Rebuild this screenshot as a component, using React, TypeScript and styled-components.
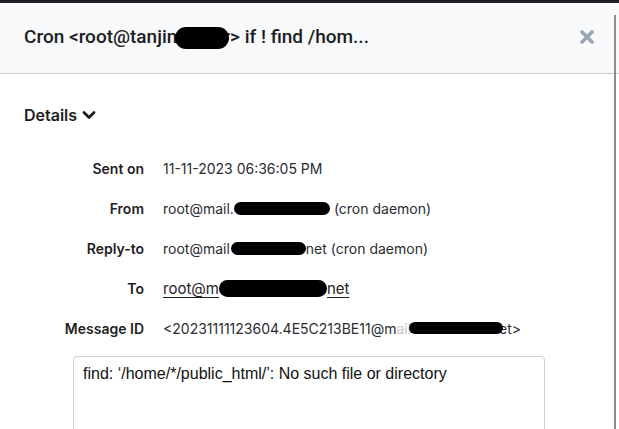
import React from "react";
import styled, { createGlobalStyle } from "styled-components";

const Global = createGlobalStyle`
  html, body { margin: 0; padding: 0; background: #ffffff; }
  body { font-family: Inter, "Noto Sans", Arial, sans-serif; color: #1d1f24; overflow: hidden; }
`;

const Page = styled.div`
  position: relative;
  width: 619px;
  height: 429px;
  overflow: hidden;
  background: #ffffff;
`;

const TopStrip = styled.div`
  height: 3px;
  background: #1e2025;
`;

const Header = styled.header`
  height: 71px;
  box-sizing: border-box;
  display: flex;
  align-items: center;
  justify-content: space-between;
  padding: 0 25px 2px 24px;
  background: #f7f9fb;
  border-bottom: 1px solid #c6cfda;
`;

const Title = styled.h1`
  margin: 0;
  font-family: Roboto, Inter, Arial, sans-serif;
  font-size: 19px;
  font-weight: 500;
  color: #1b1d22;
  white-space: nowrap;
`;

const Blob = styled.span<{ $w: number; $h: number; $ml?: number; $mr?: number }>`
  display: inline-block;
  width: ${(p) => p.$w}px;
  height: ${(p) => p.$h}px;
  margin-left: ${(p) => p.$ml ?? 0}px;
  margin-right: ${(p) => p.$mr ?? 0}px;
  background: #000;
  border-radius: 999px;
  vertical-align: middle;
  position: relative;
`;

const Faint = styled.span`
  color: #c4c6ca;
`;

const CloseButton = styled.button`
  border: 0;
  background: none;
  padding: 0;
  width: 14px;
  height: 14px;
  display: flex;
  cursor: pointer;
`;

const ScrollEdge = styled.div`
  position: absolute;
  left: 614px;
  top: 15px;
  bottom: 0;
  width: 2px;
  background: #8c8c8c;
`;

const Body = styled.section`
  padding: 32px 0 0 24px;
`;

const DetailsToggle = styled.div`
  display: flex;
  align-items: center;
  gap: 5px;
  font-size: 16px;
  font-weight: 600;
  color: #1b1d22;
  height: 18px;
`;

const Grid = styled.dl`
  display: grid;
  grid-template-columns: 120px 1fr;
  column-gap: 19px;
  grid-auto-rows: 40px;
  margin: 24px 0 0 0;
`;

const Label = styled.dt`
  display: flex;
  align-items: center;
  justify-content: flex-end;
  font-size: 14px;
  font-weight: 600;
  color: #1f2126;
`;

const Value = styled.dd`
  margin: 0;
  display: flex;
  align-items: center;
  font-size: 14px;
  color: #2a2c31;
  white-space: nowrap;
`;

const Link = styled.span`
  font-size: 15px;
  color: #1f2126;
  text-decoration: underline;
  text-underline-offset: 3px;
  display: inline-flex;
  align-items: center;
`;

const MessageBox = styled.div`
  margin: 8px 0 0 49px;
  width: 472px;
  height: 120px;
  box-sizing: border-box;
  border: 1px solid #c9d1dc;
  border-radius: 4px;
  padding: 8px 9px;
  font-family: "Liberation Sans", Arial, sans-serif;
  font-size: 16px;
  color: #111;
`;

export default function App() {
  return (
    <Page>
      <Global />
      <TopStrip />
      <Header>
        <Title>
          Cron &lt;root@tanjim
          <Blob $w={54} $h={22} $ml={-8} $mr={-6} />
          r&gt; if ! find /hom...
        </Title>
        <CloseButton aria-label="Close">
          <svg width="14" height="14" viewBox="0 0 14 14">
            <path d="M2 2 L12 12 M12 2 L2 12" stroke="#9aa5b4" strokeWidth="3.6" strokeLinecap="round" />
          </svg>
        </CloseButton>
      </Header>
      <Body>
        <DetailsToggle>
          Details
          <svg width="14" height="10" viewBox="0 0 14 10">
            <path d="M2 2.5 L7 7.5 L12 2.5" fill="none" stroke="#1b1d22" strokeWidth="2.8" strokeLinecap="round" strokeLinejoin="round" />
          </svg>
        </DetailsToggle>
        <Grid>
          <Label>Sent on</Label>
          <Value>11-11-2023 06:36:05 PM</Value>
          <Label>From</Label>
          <Value>
            root@mail.
            <Blob $w={96} $h={13} $mr={4} />
            (cron daemon)
          </Value>
          <Label>Reply-to</Label>
          <Value>
            root@mail
            <Blob $w={75} $h={13} $ml={1} />
            net (cron daemon)
          </Value>
          <Label>To</Label>
          <Value>
            <Link>
              root@m
              <Blob $w={108} $h={17} />
              net
            </Link>
          </Value>
          <Label>Message ID</Label>
          <Value>
            &lt;20231111123604.4E5C213BE11@m<Faint>ail</Faint>
            <Blob $w={94} $h={12} $ml={-2} $mr={-4} />
            et&gt;
          </Value>
        </Grid>
        <MessageBox>find: ‘/home/*/public_html/’: No such file or directory</MessageBox>
      </Body>
      <ScrollEdge />
    </Page>
  );
}
